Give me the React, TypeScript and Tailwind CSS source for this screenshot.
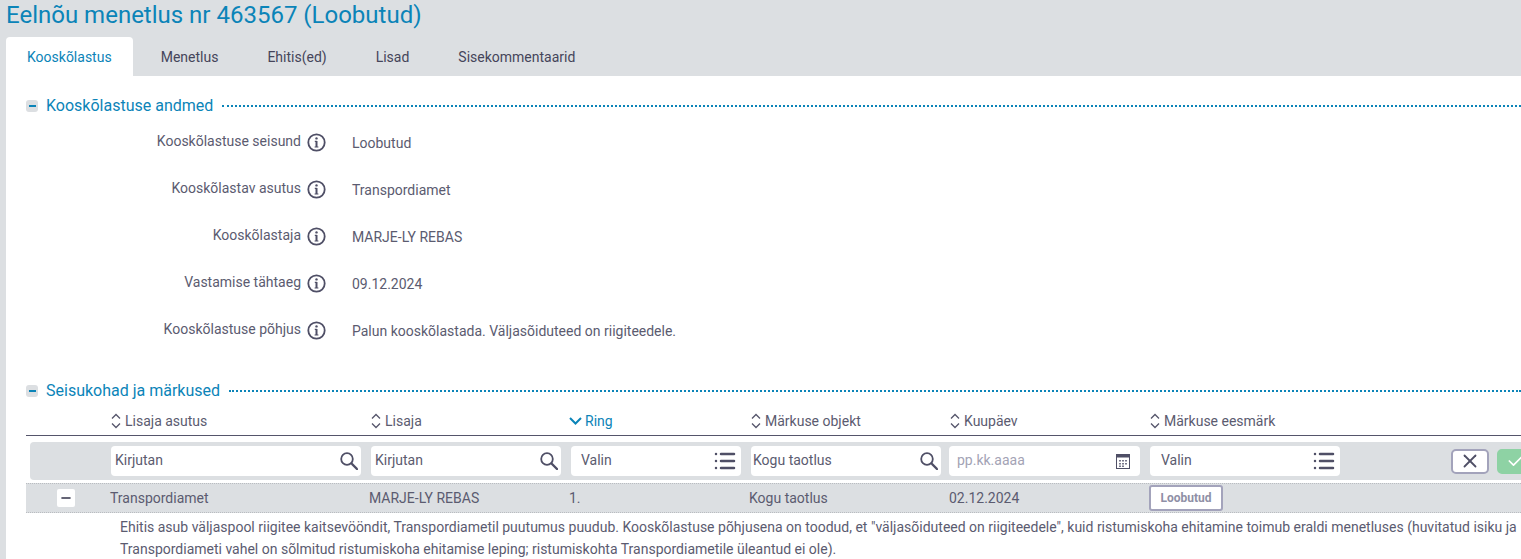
import { Check, List, Minus, X } from 'lucide-react';

const rows = [
  { label: 'Kooskõlastuse seisund', value: 'Loobutud' },
  { label: 'Kooskõlastav asutus', value: 'Transpordiamet' },
  { label: 'Kooskõlastaja', value: 'MARJE-LY REBAS' },
  { label: 'Vastamise tähtaeg', value: '09.12.2024' },
  { label: 'Kooskõlastuse põhjus', value: 'Palun kooskõlastada. Väljasõiduteed on riigiteedele.' },
];

const InfoIcon = () => (
  <svg width="19" height="19" viewBox="0 0 19 19" fill="none" className="shrink-0">
    <circle cx="9.5" cy="9.5" r="8.2" stroke="#4f4f66" strokeWidth="1.8" />
    <circle cx="9.5" cy="5.4" r="1.2" fill="#4f4f66" />
    <path d="M9.5 8v6" stroke="#4f4f66" strokeWidth="2" />
    <path d="M7.8 8.300h2M7.600 14h3.800" stroke="#4f4f66" strokeWidth="1.200" />
  </svg>
);

const SortIcon = () => (
  <svg width="10" height="16" viewBox="0 0 10 16" fill="none" className="shrink-0">
    <path d="M1 5.500 5 1.500l4 4M1 10.500l4 4 4-4" stroke="#55556b" strokeWidth="1.3" />
  </svg>
);

const SortedIcon = () => (
  <svg width="13" height="8" viewBox="0 0 13 8" fill="none" className="shrink-0">
    <path d="m1 1 5.500 5.500L12 1" stroke="#0b84b8" strokeWidth="2" />
  </svg>
);

const SearchIcon = () => (
  <svg width="18" height="18" viewBox="0 0 18 18" fill="none" className="shrink-0">
    <circle cx="7" cy="7" r="5.800" stroke="#4f4f66" strokeWidth="1.800" />
    <path d="m11.500 11.500 5.500 5.500" stroke="#4f4f66" strokeWidth="2.400" strokeLinecap="round" />
  </svg>
);

const CalendarIcon = () => (
  <svg width="14" height="15" viewBox="0 0 14 15" fill="none">
    <rect x="0.5" y="0.5" width="13" height="14" fill="#fff" stroke="#4f4f66" />
    <rect x="0.5" y="0.5" width="13" height="3" fill="#4f4f66" />
    <path d="M3 6h2v1.500H3zM6 6h2v1.500H6zM9 6h2v1.500H9zM3 9h2v1.500H3zM6 9h2v1.500H6zM9 9h2v1.500H9zM3 11.500h2V13H3zM6 11.500h2V13H6z" fill="#77778a" />
  </svg>
);

const SectionTitle = ({ title }: { title: string }) => (
  <div className="flex items-center h-6">
    <div className="w-3 h-3 rounded-[3px] bg-[#dcdfe2] flex items-center justify-center shrink-0">
      <div className="w-[7px] h-[2px] bg-[#0b84b8]"></div>
    </div>
    <div className="ml-2 text-[16px] text-[#0b84b8] whitespace-nowrap">{title}</div>
    <div className="ml-[9px] flex-1 border-t-2 border-dotted border-[#0b84b8]"></div>
  </div>
);

const FilterInput = ({ width, text, muted, icon }: { width: string; text: string; muted?: boolean; icon: React.ReactNode }) => (
  <div className={`${width} h-[30px] bg-white rounded-[4px] flex items-center justify-between pl-1 pr-[3px] shrink-0`}>
    <span className={`-mt-[2px] ${muted ? 'text-[#a3a3b5]' : 'text-[#5b5b70]'}`}>{text}</span>
    {icon}
  </div>
);

const searchIcon = <SearchIcon />;
const listIcon = <List size={24} strokeWidth={2.5} color="#4f4f66" />;

export default function App() {
  return (
    <div className="h-[559px] w-full overflow-hidden bg-[#dcdfe2] font-['Roboto',sans-serif] text-[14px] text-[#5b5b70]">
      <h1 className="h-[37px] pl-[6px] text-[24px] leading-[30px] text-[#0b84b8] whitespace-nowrap">Eelnõu menetlus nr 463567 (Loobutud)</h1>

      {/* Tabs */}
      <div className="h-[39px] pl-[6px] flex gap-[7px]">
        <div className="px-[21px] pt-[2px] bg-white rounded-t-[4px] flex items-center text-[#0b84b8]">Kooskõlastus</div>
        <div className="px-[21px] pt-[2px] flex items-center text-[#45455a]">Menetlus</div>
        <div className="px-[21px] pt-[2px] flex items-center text-[#45455a]">Ehitis(ed)</div>
        <div className="px-[21px] pt-[2px] flex items-center text-[#45455a]">Lisad</div>
        <div className="px-[21px] pt-[2px] flex items-center text-[#45455a]">Sisekommentaarid</div>
      </div>

      <div className="ml-[6px] bg-white h-[483px] pl-5 pt-[18px] overflow-hidden">
        <SectionTitle title="Kooskõlastuse andmed" />

        {/* Details */}
        <div className="mt-[12px]">
          {rows.map(r => (
            <div key={r.label} className="h-[47px] flex items-start pt-[3px]">
              <div className="w-[301px] -ml-[26px] flex justify-end">
                <span className="whitespace-nowrap leading-[20px] -mt-[2px]">{r.label}</span>
              </div>
              <div className="ml-[6px]"><InfoIcon /></div>
              <div className="ml-[26px] leading-[20px]">{r.value}</div>
            </div>
          ))}
        </div>

        <div className="mt-[14px]">
          <SectionTitle title="Seisukohad ja märkused" />
        </div>

        {/* Table head */}
        <div className="mt-[2px] h-[31px] pt-[2px] border-b border-[#55556b] flex items-center pl-[85px]">
          <div className="w-[260px] flex items-center gap-1"><SortIcon />Lisaja asutus</div>
          <div className="w-[200px] flex items-center gap-1"><SortIcon />Lisaja</div>
          <div className="w-[180px] flex items-center gap-[3px] -ml-[2px] text-[#0b84b8]"><SortedIcon />Ring</div>
          <div className="w-[199px] flex items-center gap-1 ml-[2px]"><SortIcon />Märkuse objekt</div>
          <div className="w-[200px] flex items-center gap-1"><SortIcon />Kuupäev</div>
          <div className="flex items-center gap-1"><SortIcon />Märkuse eesmärk</div>
        </div>

        {/* Filter row */}
        <div className="mt-[6px] ml-1 h-[38px] bg-[#dcdfe2] rounded-l-[4px] flex items-center pl-[81px]">
          <FilterInput width="w-[250px]" text="Kirjutan" icon={searchIcon} />
          <div className="ml-[10px]"><FilterInput width="w-[190px]" text="Kirjutan" icon={searchIcon} /></div>
          <div className="ml-[10px]"><FilterInput width="w-[170px] !pl-[10px] !pr-1" text="Valin" icon={listIcon} /></div>
          <div className="ml-[10px]"><FilterInput width="w-[190px] !pl-[2px]" text="Kogu taotlus" icon={searchIcon} /></div>
          <div className="ml-2"><FilterInput width="w-[191px] !pl-2 !pr-[10px]" text="pp.kk.aaaa" muted icon={<CalendarIcon />} /></div>
          <div className="ml-[10px]"><FilterInput width="w-[190px] !pl-[11px] !pr-1" text="Valin" icon={listIcon} /></div>
          <div className="ml-[111px] w-[38px] h-[25px] bg-white border-2 border-[#a3a3bb] rounded-[5px] flex items-center justify-center shrink-0">
            <X size={22} strokeWidth={2} color="#4f4f66" />
          </div>
          <div className="ml-2 w-[38px] h-[25px] bg-[#8ed2a4] border-2 border-[#8ed2a4] rounded-[5px] flex items-center justify-center shrink-0">
            <Check size={20} strokeWidth={2} color="#fff" />
          </div>
        </div>

        {/* Data row */}
        <div className="mt-[3px] h-[30px] bg-[#dcdfe2] border-y border-dotted border-[#b9bcc0] flex items-center whitespace-nowrap">
          <div className="ml-[31px] w-[18px] h-[18px] bg-white rounded-[2px] flex items-center justify-center shrink-0">
            <Minus size={14} strokeWidth={2.5} color="#33334a" />
          </div>
          <div className="ml-[35px] w-[259px]">Transpordiamet</div>
          <div className="w-[200px]">MARJE-LY REBAS</div>
          <div className="w-[180px]">1.</div>
          <div className="w-[200px]">Kogu taotlus</div>
          <div className="w-[200px]">02.12.2024</div>
          <div className="w-[74px] h-[26px] bg-white border-2 border-[#a3a3bb] rounded-[3px] flex items-center justify-center text-[12px] font-bold text-[#8f8fa6]">Loobutud</div>
        </div>

        <div className="mt-[3px] pl-[94px] leading-[22px] whitespace-nowrap">
          <div>Ehitis asub väljaspool riigitee kaitsevööndit, Transpordiametil puutumus puudub. Kooskõlastuse põhjusena on toodud, et "väljasõiduteed on riigiteedele", kuid ristumiskoha ehitamine toimub eraldi menetluses (huvitatud isiku ja</div>
          <div>Transpordiameti vahel on sõlmitud ristumiskoha ehitamise leping; ristumiskohta Transpordiametile üleantud ei ole).</div>
        </div>
      </div>
    </div>
  );
}
